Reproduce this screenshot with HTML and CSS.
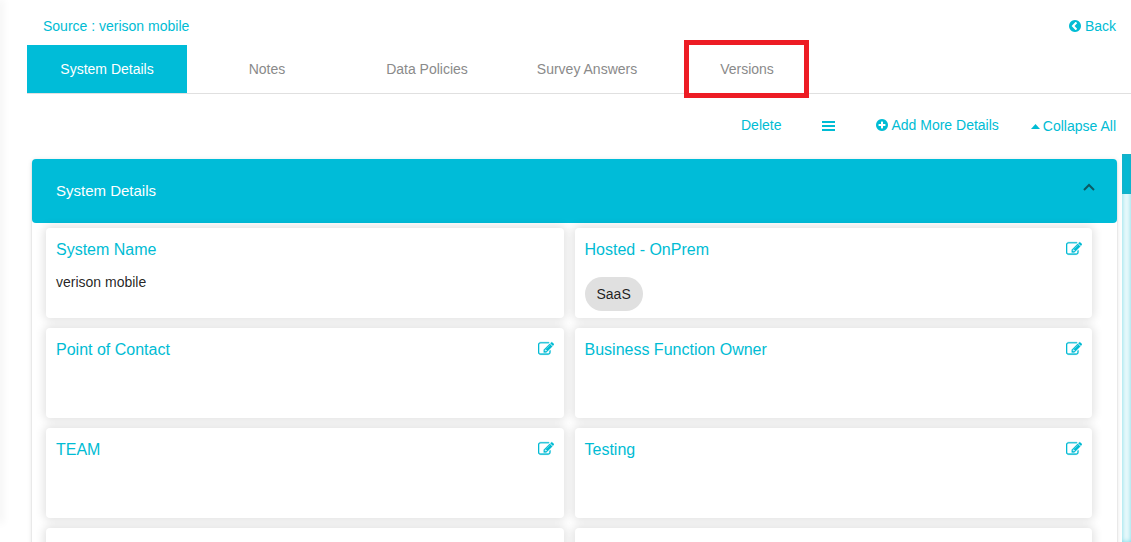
FILE: index.html
```html
<!DOCTYPE html>
<html lang="en">
<head>
    <meta charset="UTF-8">
    <meta name="viewport" content="width=device-width, initial-scale=1.0">
    <title>Source : verison mobile</title>
    <link rel="stylesheet" href="styles.css">
</head>
<body>

    <!-- Shared icons -->
    <svg class="icon-defs" aria-hidden="true">
        <symbol id="icon-edit" viewBox="0 0 1792 1792">
            <path d="M888 1184l116-116-152-152-116 116v56h96v96h56zm440-720q-16-16-33 1l-350 350q-17 17-1 33t33-1l350-350q17-17 1-33zm80 594v190q0 119-84.5 203.5t-203.5 84.5h-832q-119 0-203.5-84.5t-84.5-203.5v-832q0-119 84.5-203.5t203.5-84.5h832q63 0 117 25 15 7 18 23 3 17-9 29l-49 49q-14 14-32 8-23-6-45-6h-832q-66 0-113 47t-47 113v832q0 66 47 113t113 47h832q66 0 113-47t47-113v-126q0-13 9-22l64-64q15-15 35-7t20 29zm-96-738l288 288-672 672h-288v-288zm444 132l-92 92-288-288 92-92q28-28 68-28t68 28l152 152q28 28 28 68t-28 68z"/>
        </symbol>
    </svg>

    <div class="sidebar-edge"></div>

    <main class="page">
        <header class="page-header">
            <span class="source">Source : verison mobile</span>
            <a class="back" href="#">
                <svg class="icon-circle" viewBox="128 128 1536 1536" aria-hidden="true"><path d="M1037 1395l102-102q19-19 19-45t-19-45l-307-307 307-307q19-19 19-45t-19-45l-102-102q-19-19-45-19t-45 19l-454 454q-19 19-19 45t19 45l454 454q19 19 45 19t45-19zm627-499q0 209-103 385.5t-279.5 279.5-385.5 103-385.5-103-279.5-279.5-103-385.5 103-385.5 279.5-279.5 385.5-103 385.5 103 279.5 279.5 103 385.5z"/></svg>
                Back
            </a>
        </header>

        <nav class="tabs">
            <button class="tab active">System Details</button>
            <button class="tab">Notes</button>
            <button class="tab">Data Policies</button>
            <button class="tab">Survey Answers</button>
            <button class="tab highlighted">Versions</button>
        </nav>

        <div class="toolbar">
            <button class="action">Delete</button>
            <button class="action menu" aria-label="Menu">
                <svg class="icon-bars" viewBox="0 0 13 10" aria-hidden="true"><path d="M0 0h13v2H0zM0 4h13v2H0zM0 8h13v2H0z"/></svg>
            </button>
            <button class="action add">
                <svg class="icon-circle" viewBox="128 128 1536 1536" aria-hidden="true"><path d="M1344 960v-128q0-26-19-45t-45-19h-256v-256q0-26-19-45t-45-19h-128q-26 0-45 19t-19 45v256h-256q-26 0-45 19t-19 45v128q0 26 19 45t45 19h256v256q0 26 19 45t45 19h128q26 0 45-19t19-45v-256h256q26 0 45-19t19-45zm320-64q0 209-103 385.5t-279.5 279.5-385.5 103-385.5-103-279.5-279.5-103-385.5 103-385.5 279.5-279.5 385.5-103 385.5 103 279.5 279.5 103 385.5z"/></svg>
                Add More Details
            </button>
            <button class="action collapse">
                <svg class="icon-caret" viewBox="0 0 9 5" aria-hidden="true"><path d="M0 5l4.500-5L9 5z"/></svg>
                Collapse All
            </button>
        </div>

        <div class="scroll-area">
            <section class="panel">
                <button class="panel-header" aria-expanded="true">
                    System Details
                    <svg class="icon-chevron" viewBox="0 0 12 8" aria-hidden="true"><path d="M1 7l5-5 5 5"/></svg>
                </button>
                <div class="cards">
                    <article class="card">
                        <div class="card-head"><h2>System Name</h2></div>
                        <p>verison mobile</p>
                    </article>
                    <article class="card">
                        <div class="card-head">
                            <h2>Hosted - OnPrem</h2>
                            <button class="edit" aria-label="Edit Hosted - OnPrem"><svg><use href="#icon-edit"/></svg></button>
                        </div>
                        <span class="chip">SaaS</span>
                    </article>
                    <article class="card">
                        <div class="card-head">
                            <h2>Point of Contact</h2>
                            <button class="edit" aria-label="Edit Point of Contact"><svg><use href="#icon-edit"/></svg></button>
                        </div>
                    </article>
                    <article class="card">
                        <div class="card-head">
                            <h2>Business Function Owner</h2>
                            <button class="edit" aria-label="Edit Business Function Owner"><svg><use href="#icon-edit"/></svg></button>
                        </div>
                    </article>
                    <article class="card">
                        <div class="card-head">
                            <h2>TEAM</h2>
                            <button class="edit" aria-label="Edit TEAM"><svg><use href="#icon-edit"/></svg></button>
                        </div>
                    </article>
                    <article class="card">
                        <div class="card-head">
                            <h2>Testing</h2>
                            <button class="edit" aria-label="Edit Testing"><svg><use href="#icon-edit"/></svg></button>
                        </div>
                    </article>
                    <article class="card"></article>
                    <article class="card"></article>
                </div>
            </section>
            <div class="scrollbar"><div class="thumb"></div></div>
        </div>
    </main>

</body>
</html>
```

FILE: styles.css
```css
* {
    box-sizing: border-box;
}
body {
    margin: 0;
    height: 100vh;
    display: flex;
    overflow: hidden;
    background: #fff;
    color: rgba(0, 0, 0, 0.87);
    font-family: "Liberation Sans", Arial, sans-serif;
    font-size: 14px;
}
button {
    padding: 0;
    border: 0;
    background: none;
    font: inherit;
    cursor: pointer;
}
svg {
    flex: none;
    fill: currentColor;
}
.icon-defs {
    position: absolute;
    width: 0;
    height: 0;
}
.sidebar-edge {
    width: 0;
    height: calc(100vh - 20px);
    box-shadow: 0 0 8px 1px rgba(0, 0, 0, 0.16);
}
.page {
    flex: 1;
    min-width: 0;
    display: flex;
    flex-direction: column;
    margin-left: 27px;
}

/* Header */
.page-header {
    display: flex;
    justify-content: space-between;
    padding: 18px 15px 11px 16px;
    line-height: 16px;
    color: #00bcd4;
}
.back {
    display: flex;
    align-items: center;
    gap: 4px;
    color: inherit;
    text-decoration: none;
}
.icon-circle {
    width: 12px;
    height: 12px;
}

/* Tabs */
.tabs {
    display: flex;
    border-bottom: 1px solid #e0e0e0;
}
.tab {
    position: relative;
    width: 160px;
    height: 48px;
    color: #8a8a8a;
}
.tab.active {
    background: #00bcd8;
    color: #fff;
}
.tab.highlighted::after {
    content: "";
    position: absolute;
    inset: -5px 18px -5px 17px;
    border: 5px solid #ed1c24;
}

/* Actions */
.toolbar {
    display: flex;
    justify-content: flex-end;
    align-items: center;
    height: 60px;
    padding: 2px 15px 0 0;
}
.action {
    display: flex;
    align-items: center;
    margin-left: 41px;
    line-height: 16px;
    color: #00bcd4;
}
.action.menu {
    padding-top: 2px;
}
.action.add {
    gap: 3px;
}
.action.collapse {
    gap: 3px;
    margin-left: 32px;
    padding-top: 2px;
}
.icon-bars {
    width: 13px;
    height: 10px;
}
.icon-caret {
    width: 9px;
    height: 5px;
}

/* Scrolling content */
.scroll-area {
    flex: 1;
    min-height: 0;
    display: flex;
    gap: 5px;
    padding-left: 5px;
    overflow: hidden;
}
.panel {
    flex: 1;
    height: max-content;
    margin-top: 5px;
    border-radius: 4px;
    box-shadow: 0 3px 1px -2px rgba(0, 0, 0, 0.2), 0 2px 2px 0 rgba(0, 0, 0, 0.14), 0 1px 5px 0 rgba(0, 0, 0, 0.12);
}
.panel-header {
    display: flex;
    justify-content: space-between;
    align-items: center;
    width: 100%;
    height: 64px;
    padding: 0 22px 2px 24px;
    border-radius: 4px;
    background: #00bcd8;
    color: #fff;
    font-size: 15px;
}
.icon-chevron {
    width: 12px;
    height: 8px;
    margin-bottom: 6px;
    fill: none;
    stroke: #0b5963;
    stroke-width: 2;
}
.cards {
    display: grid;
    grid-template-columns: 1fr 1fr;
    gap: 10px 11px;
    padding: 5px 25px 24px 14px;
}
.card {
    height: 90px;
    padding: 12px 10px;
    border-radius: 4px;
    background: #fff;
    box-shadow: 0 0 10px 2px rgba(0, 0, 0, 0.12);
}
.card-head {
    display: flex;
    justify-content: space-between;
    align-items: center;
    height: 20px;
    color: #00bcd4;
}
.card h2 {
    margin: 0;
    font-size: 16px;
    font-weight: normal;
}
.card p {
    margin: 14px 0 0;
    line-height: 16px;
}
.edit {
    display: flex;
    padding-bottom: 2px;
    color: inherit;
}
.edit svg {
    width: 16px;
    height: 16px;
    stroke: currentColor;
    stroke-width: 30;
}
.chip {
    display: inline-block;
    margin-top: 17px;
    padding: 0 12px;
    border-radius: 17px;
    background: #e0e0e0;
    line-height: 34px;
}
.scrollbar {
    width: 9px;
    background: #ecfafc;
    box-shadow: inset 0 0 5px rgba(0, 188, 212, 0.5);
}
.thumb {
    height: 40px;
    background: #00bcd8;
    box-shadow: inset 0 0 6px rgba(128, 128, 128, 0.3);
}
```
